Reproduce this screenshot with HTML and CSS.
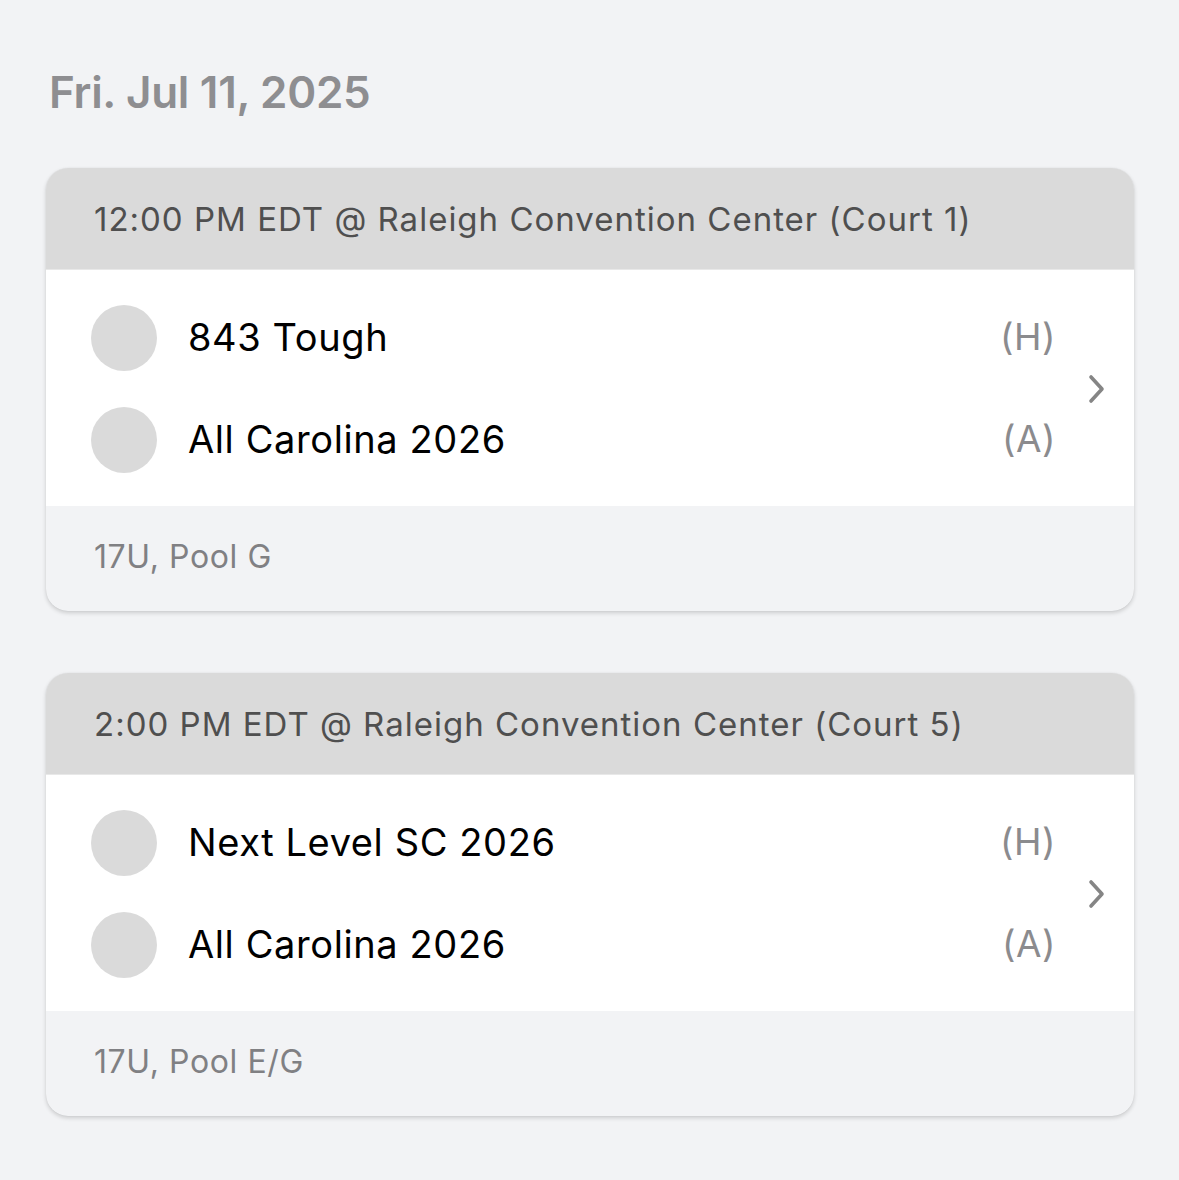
FILE: index.html
```html
<!DOCTYPE html>
<html>
<head>
<meta charset="utf-8">
<link rel="stylesheet" href="styles.css">
</head>
<body>
<main class="page">
  <h1 class="date">Fri. Jul 11, 2025</h1>

  <section class="card">
    <div class="card-head">12:00 PM EDT @ Raleigh Convention Center (Court 1)</div>
    <div class="card-body">
      <div class="teams">
        <div class="team"><span class="logo"></span><span class="name">843 Tough</span><span class="side">(H)</span></div>
        <div class="team"><span class="logo"></span><span class="name">All Carolina 2026</span><span class="side">(A)</span></div>
      </div>
      <svg class="chev" width="18" height="30" viewBox="0 0 18 30"><path d="M3 3 L14 15 L3 27" fill="none" stroke="#858585" stroke-width="3.6" stroke-linecap="round" stroke-linejoin="round"/></svg>
    </div>
    <div class="card-foot">17U, Pool G</div>
  </section>

  <section class="card">
    <div class="card-head">2:00 PM EDT @ Raleigh Convention Center (Court 5)</div>
    <div class="card-body">
      <div class="teams">
        <div class="team"><span class="logo"></span><span class="name">Next Level SC 2026</span><span class="side">(H)</span></div>
        <div class="team"><span class="logo"></span><span class="name">All Carolina 2026</span><span class="side">(A)</span></div>
      </div>
      <svg class="chev" width="18" height="30" viewBox="0 0 18 30"><path d="M3 3 L14 15 L3 27" fill="none" stroke="#858585" stroke-width="3.6" stroke-linecap="round" stroke-linejoin="round"/></svg>
    </div>
    <div class="card-foot">17U, Pool E/G</div>
  </section>
</main>
</body>
</html>
```

FILE: styles.css
```css
html, body {
  margin: 0;
  padding: 0;
  background: #f2f3f5;
}
body {
  font-family: Inter, "Noto Sans", sans-serif;
}
.page {
  padding: 65px 45px 40px 46px;
  display: flex;
  flex-direction: column;
  gap: 62px;
}
.date {
  margin: 0 0 -13px 3px;
  font-size: 44px;
  font-weight: 600;
  color: #8e8e91;
  line-height: 54px;
  letter-spacing: -0.3px;
}
.card {
  background: #f2f3f5;
  border-radius: 22px;
  overflow: hidden;
  box-shadow: 0 2px 4px rgba(0,0,0,0.16), 0 0 1px rgba(0,0,0,0.12);
}
.card-head {
  background: #dadada;
  height: 102px;
  display: flex;
  align-items: center;
  padding-left: 48px;
  font-size: 33px;
  letter-spacing: 1px;
  color: #4f4f4f;
  border-bottom: 1px solid #e8e8e8;
  box-sizing: border-box;
}
.card-body {
  background: #ffffff;
  display: flex;
  align-items: center;
  padding: 17px 28px 15px 45px;
}
.teams {
  flex: 1;
  display: flex;
  flex-direction: column;
}
.team {
  height: 102px;
  display: flex;
  align-items: center;
}
.logo {
  width: 66px;
  height: 66px;
  border-radius: 50%;
  background: #dadada;
  flex: none;
}
.name {
  flex: 1;
  margin-left: 31px;
  font-size: 38px;
  letter-spacing: 0.6px;
  color: #000;
  margin-top: -3px;
}
.side {
  font-size: 37px;
  letter-spacing: 0.5px;
  color: #8b8b8e;
  margin-right: 32px;
  margin-top: -3px;
}
.chev {
  flex: none;
}
.card-foot {
  height: 105px;
  display: flex;
  align-items: center;
  padding-left: 48px;
  font-size: 32px;
  letter-spacing: 0.6px;
  color: #808083;
  padding-bottom: 4px;
  box-sizing: border-box;
}
```
